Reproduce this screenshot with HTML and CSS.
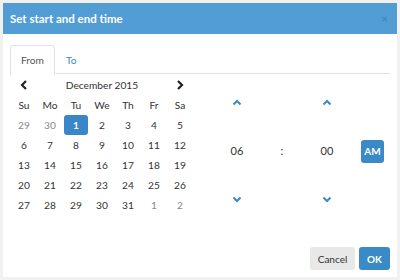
FILE: index.html
```html
<!DOCTYPE html>
<html lang="en">
<head>
    <meta charset="UTF-8">
    <title>Set start and end time</title>
    <link rel="stylesheet" href="styles.css">
</head>
<body>

    <div class="dialog">
        <!-- Header -->
        <div class="dialog-header">
            <span class="dialog-title">Set start and end time</span>
            <span class="close">&times;</span>
        </div>

        <div class="dialog-body">
            <!-- Tabs -->
            <div class="tabs">
                <div class="tab active">From</div>
                <div class="tab">To</div>
            </div>

            <div class="picker">
                <!-- Calendar -->
                <div class="calendar">
                    <div class="month-row">
                        <svg class="nav" width="8" height="10" viewBox="0 0 8 10"><path d="M6 1 L2 5 L6 9" fill="none" stroke="#222" stroke-width="2.2"/></svg>
                        <span>December 2015</span>
                        <svg class="nav" width="8" height="10" viewBox="0 0 8 10"><path d="M2 1 L6 5 L2 9" fill="none" stroke="#222" stroke-width="2.2"/></svg>
                    </div>
                    <div class="grid">
                        <span class="wd">Su</span><span class="wd">Mo</span><span class="wd">Tu</span><span class="wd">We</span><span class="wd">Th</span><span class="wd">Fr</span><span class="wd">Sa</span>
                        <span class="old">29</span><span class="old">30</span><span class="day"><b class="sel">1</b></span><span>2</span><span>3</span><span>4</span><span>5</span>
                        <span>6</span><span>7</span><span>8</span><span>9</span><span>10</span><span>11</span><span>12</span>
                        <span>13</span><span>14</span><span>15</span><span>16</span><span>17</span><span>18</span><span>19</span>
                        <span>20</span><span>21</span><span>22</span><span>23</span><span>24</span><span>25</span><span>26</span>
                        <span>27</span><span>28</span><span>29</span><span>30</span><span>31</span><span class="old">1</span><span class="old">2</span>
                    </div>
                </div>

                <!-- Time -->
                <div class="time">
                    <div class="time-col hour">
                        <svg class="chev" width="10" height="7" viewBox="0 0 10 7"><path d="M1.5 5.5 L5 2 L8.5 5.5" fill="none" stroke="#3a8ac8" stroke-width="2"/></svg>
                        <span class="value">06</span>
                        <svg class="chev" width="10" height="7" viewBox="0 0 10 7"><path d="M1.5 1.5 L5 5 L8.5 1.5" fill="none" stroke="#3a8ac8" stroke-width="2"/></svg>
                    </div>
                    <div class="time-col colon">
                        <span class="value">:</span>
                    </div>
                    <div class="time-col minute">
                        <svg class="chev" width="10" height="7" viewBox="0 0 10 7"><path d="M1.5 5.5 L5 2 L8.5 5.5" fill="none" stroke="#3a8ac8" stroke-width="2"/></svg>
                        <span class="value">00</span>
                        <svg class="chev" width="10" height="7" viewBox="0 0 10 7"><path d="M1.5 1.5 L5 5 L8.5 1.5" fill="none" stroke="#3a8ac8" stroke-width="2"/></svg>
                    </div>
                    <div class="time-col meridian">
                        <button class="btn btn-primary am">AM</button>
                    </div>
                </div>
            </div>
        </div>

        <!-- Footer -->
        <div class="dialog-footer">
            <button class="btn btn-default cancel">Cancel</button>
            <button class="btn btn-primary ok">OK</button>
        </div>
    </div>

</body>
</html>
```

FILE: styles.css
```css
body {
    margin: 0;
    padding: 3px;
    background-color: #f1f1f1;
    font-family: Lato, "Open Sans", sans-serif;
    font-size: 10.2px;
    color: #333;
}

/* Dialog frame */
.dialog {
    width: 394px;
    height: 274px;
    background: #fff;
    display: flex;
    flex-direction: column;
}

.dialog-header {
    height: 31px;
    background: #519dd4;
    display: flex;
    align-items: center;
    justify-content: space-between;
    padding: 0 9px 0 7px;
}

.dialog-title {
    color: #fff;
    font-weight: bold;
    font-size: 11.5px;
}

.close {
    color: #3b77a3;
    font-size: 12px;
    opacity: 0.7;
}

.dialog-body {
    flex: 1;
    padding: 11px 7px 0 5px;
}

/* Tabs */
.tabs {
    display: flex;
    border-bottom: 1px solid #e2e2e2;
    margin-left: 2px;
    height: 28px;
}

.tab {
    padding: 0 10px;
    line-height: 28px;
    color: #3a8ac8;
    border: 1px solid transparent;
    border-radius: 3px 3px 0 0;
}

.tab.active {
    color: #555;
    border-color: #e2e2e2;
    border-bottom-color: #fff;
    background: #fff;
    height: 28px;
}

/* Calendar */
.picker {
    display: flex;
}

.calendar {
    width: 182px;
    margin-left: 3px;
}

.month-row {
    height: 21px;
    display: flex;
    align-items: center;
    justify-content: space-between;
    padding: 0 9px;
}

.grid {
    display: grid;
    grid-template-columns: repeat(7, 26px);
    grid-auto-rows: 20px;
}

.grid span {
    display: flex;
    align-items: center;
    justify-content: center;
}

.grid .old {
    color: #8a8a8a;
}

.sel {
    width: 24px;
    height: 20px;
    line-height: 20px;
    text-align: center;
    background: #3a87c7;
    color: #fff;
    border-radius: 3px;
}

/* Time picker */
.time {
    display: flex;
    margin-left: 24px;
    margin-top: 5px;
}

.time-col {
    display: flex;
    flex-direction: column;
    align-items: center;
    justify-content: space-between;
    height: 144px;
}

.time-col .chev {
    margin: 20px 0;
}

.value {
    font-size: 11px;
    line-height: 20px;
}

.hour, .minute {
    width: 40px;
}

.colon {
    width: 50px;
    justify-content: center;
}

.meridian {
    margin-left: 14px;
    justify-content: center;
}

/* Buttons */
.btn {
    border: none;
    border-radius: 3px;
    font-family: inherit;
    font-size: 10px;
    height: 23px;
    padding: 0;
}

.btn-primary {
    background: #3a8ac8;
    color: #fff;
    font-weight: bold;
}

.btn-default {
    background: #e8e8e8;
    color: #333;
}

.cancel {
    width: 45px;
}

.ok {
    width: 31px;
}

.am {
    width: 23px;
    height: 23px;
}

.dialog-footer {
    display: flex;
    justify-content: flex-end;
    gap: 4px;
    padding: 0 7px 7px 0;
}
```
